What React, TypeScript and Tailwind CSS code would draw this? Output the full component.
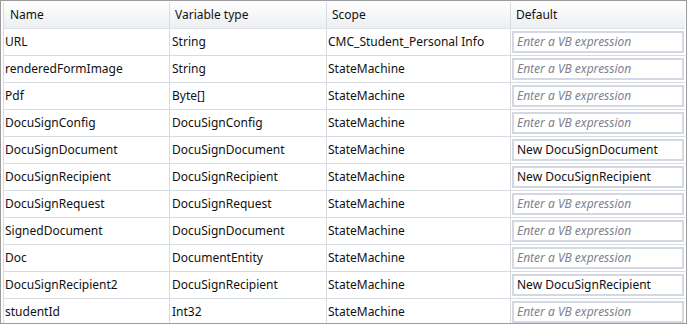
import React from 'react';

type Row = { name: string; type: string; scope: string; def?: string };

const ROWS: Row[] = [
  { name: 'URL', type: 'String', scope: 'CMC_Student_Personal Info' },
  { name: 'renderedFormImage', type: 'String', scope: 'StateMachine' },
  { name: 'Pdf', type: 'Byte[]', scope: 'StateMachine' },
  { name: 'DocuSignConfig', type: 'DocuSignConfig', scope: 'StateMachine' },
  { name: 'DocuSignDocument', type: 'DocuSignDocument', scope: 'StateMachine', def: 'New DocuSignDocument' },
  { name: 'DocuSignRecipient', type: 'DocuSignRecipient', scope: 'StateMachine', def: 'New DocuSignRecipient' },
  { name: 'DocuSignRequest', type: 'DocuSignRequest', scope: 'StateMachine' },
  { name: 'SignedDocument', type: 'DocuSignDocument', scope: 'StateMachine' },
  { name: 'Doc', type: 'DocumentEntity', scope: 'StateMachine' },
  { name: 'DocuSignRecipient2', type: 'DocuSignRecipient', scope: 'StateMachine', def: 'New DocuSignRecipient' },
  { name: 'studentId', type: 'Int32', scope: 'StateMachine' },
];

const cols = 'grid grid-cols-[166px_157px_184px_1fr]';

export default function App() {
  return (
    <div
      className="w-[687px] h-[324px] overflow-hidden bg-white border border-[#9a9a9a] pt-[1px] pl-[2px] pr-[1px] text-[12px] text-[#111111]"
      style={{ fontFamily: '"Noto Sans", "Open Sans", sans-serif' }}
    >
      <div className="border-l border-[#d6dae1]">
        {/* header */}
        <div className={`${cols} h-[27px] bg-gradient-to-b from-white to-[#eceef1] border-b border-[#dde0e5]`}>
          <div className="border-r border-[#d6dae1] pl-[6px] flex items-center">Name</div>
          <div className="border-r border-[#d6dae1] pl-[5px] flex items-center">Variable type</div>
          <div className="border-r border-[#d6dae1] pl-[5px] flex items-center">Scope</div>
          <div className="pl-[5px] flex items-center">Default</div>
        </div>
        {ROWS.map((r) => (
          <div key={r.name} className={`${cols} h-[27px] border-b border-[#d6dae1]`}>
            <div className="border-r border-[#d6dae1] pl-[1px] flex items-center whitespace-nowrap">{r.name}</div>
            <div className="border-r border-[#d6dae1] pl-[2px] flex items-center whitespace-nowrap">{r.type}</div>
            <div className="border-r border-[#d6dae1] pl-[1px] flex items-center whitespace-nowrap">{r.scope}</div>
            <div className="pl-[1px] pr-[1px] py-[2px] flex">
              <div className="flex-1 flex items-center border-2 border-[#d3d8e2] bg-white pl-[3px] whitespace-nowrap overflow-hidden">
                {r.def ? (
                  <span>{r.def}</span>
                ) : (
                  <span className="italic text-[#7d838d]">Enter a VB expression</span>
                )}
              </div>
            </div>
          </div>
        ))}
      </div>
    </div>
  );
}
